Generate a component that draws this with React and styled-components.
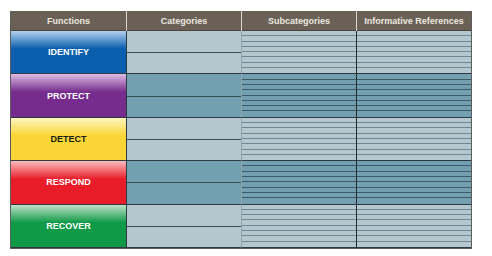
import React from "react";
import styled, { createGlobalStyle } from "styled-components";

const GlobalStyle = createGlobalStyle`
  html, body {
    margin: 0;
    padding: 0;
    background: #ffffff;
    font-family: "Liberation Sans", Arial, sans-serif;
  }
`;

const Page = styled.div`
  width: 492px;
  height: 256px;
  padding: 11px 0 0 10px;
  box-sizing: border-box;
`;

const Table = styled.div`
  width: max-content;
  display: grid;
  grid-template-columns: 115px 115px 115px 115px;
  grid-template-rows: 20px repeat(5, 43.4px);
  border: 1px solid #5c5c5c;
  border-top: none;
`;

const HeaderCell = styled.div`
  background: #6a6055;
  color: #ece8e0;
  font-size: 9px;
  font-weight: 700;
  display: flex;
  align-items: center;
  justify-content: center;
  border-left: ${(p) => (p.$first ? "none" : "1px solid #d9d4cc")};
  box-shadow: inset 0 -1px 0 #4a433b;
`;

const FunctionCell = styled.div`
  background: linear-gradient(
    to bottom,
    ${(p) => p.$light} 0%,
    ${(p) => p.$base} 42%,
    ${(p) => p.$base} 100%
  );
  color: ${(p) => p.$text};
  font-size: 9px;
  font-weight: 700;
  display: flex;
  align-items: center;
  justify-content: center;
  border-bottom: 1px solid #2f3a40;
  box-sizing: border-box;
`;

const CategoryCell = styled.div`
  display: grid;
  grid-template-rows: 1fr 1fr;
  border-left: 1px solid #2c3a42;
  border-bottom: 1px solid #2c3a42;
  box-sizing: border-box;
`;

const CategoryHalf = styled.div`
  background: ${(p) => (p.$dark ? "#72a0b1" : "#b5c7ce")};
  & + & {
    border-top: 1px solid #3a4c55;
  }
`;

const LinesCell = styled.div`
  display: grid;
  grid-template-rows: repeat(8, 1fr);
  background: ${(p) => (p.$dark ? "#72a0b1" : "#b5c7ce")};
  border-left: 1px solid ${(p) => (p.$strong ? "#1f2a30" : "#8fa3ab")};
  border-bottom: 1px solid #2c3a42;
  box-sizing: border-box;
`;

const Line = styled.div`
  border-bottom: 1px solid ${(p) => (p.$dark ? "#3c5a68" : "#6f8790")};
  &:last-child {
    border-bottom: none;
  }
`;

const functions = [
  { name: "IDENTIFY", base: "#0b5fae", light: "#b4d0ee", text: "#ffffff", dark: false },
  { name: "PROTECT", base: "#762c8c", light: "#dcbde3", text: "#ffffff", dark: true },
  { name: "DETECT", base: "#f9d635", light: "#fef5c0", text: "#1a1a1a", dark: false },
  { name: "RESPOND", base: "#e91d2a", light: "#f9bcbe", text: "#ffffff", dark: true },
  { name: "RECOVER", base: "#0f9a48", light: "#bfe1c8", text: "#ffffff", dark: false },
];

const headers = ["Functions", "Categories", "Subcategories", "Informative References"];

const Lines = ({ dark, strong }) => (
  <LinesCell $dark={dark} $strong={strong}>
    {Array.from({ length: 8 }).map((_, i) => (
      <Line key={i} $dark={dark} />
    ))}
  </LinesCell>
);

export default function App() {
  return (
    <>
      <GlobalStyle />
      <Page>
        <Table>
          {headers.map((h, i) => (
            <HeaderCell key={h} $first={i === 0}>
              {h}
            </HeaderCell>
          ))}
          {functions.map((f) => (
            <React.Fragment key={f.name}>
              <FunctionCell $base={f.base} $light={f.light} $text={f.text}>
                {f.name}
              </FunctionCell>
              <CategoryCell>
                <CategoryHalf $dark={f.dark} />
                <CategoryHalf $dark={f.dark} />
              </CategoryCell>
              <Lines dark={f.dark} />
              <Lines dark={f.dark} strong />
            </React.Fragment>
          ))}
        </Table>
      </Page>
    </>
  );
}
